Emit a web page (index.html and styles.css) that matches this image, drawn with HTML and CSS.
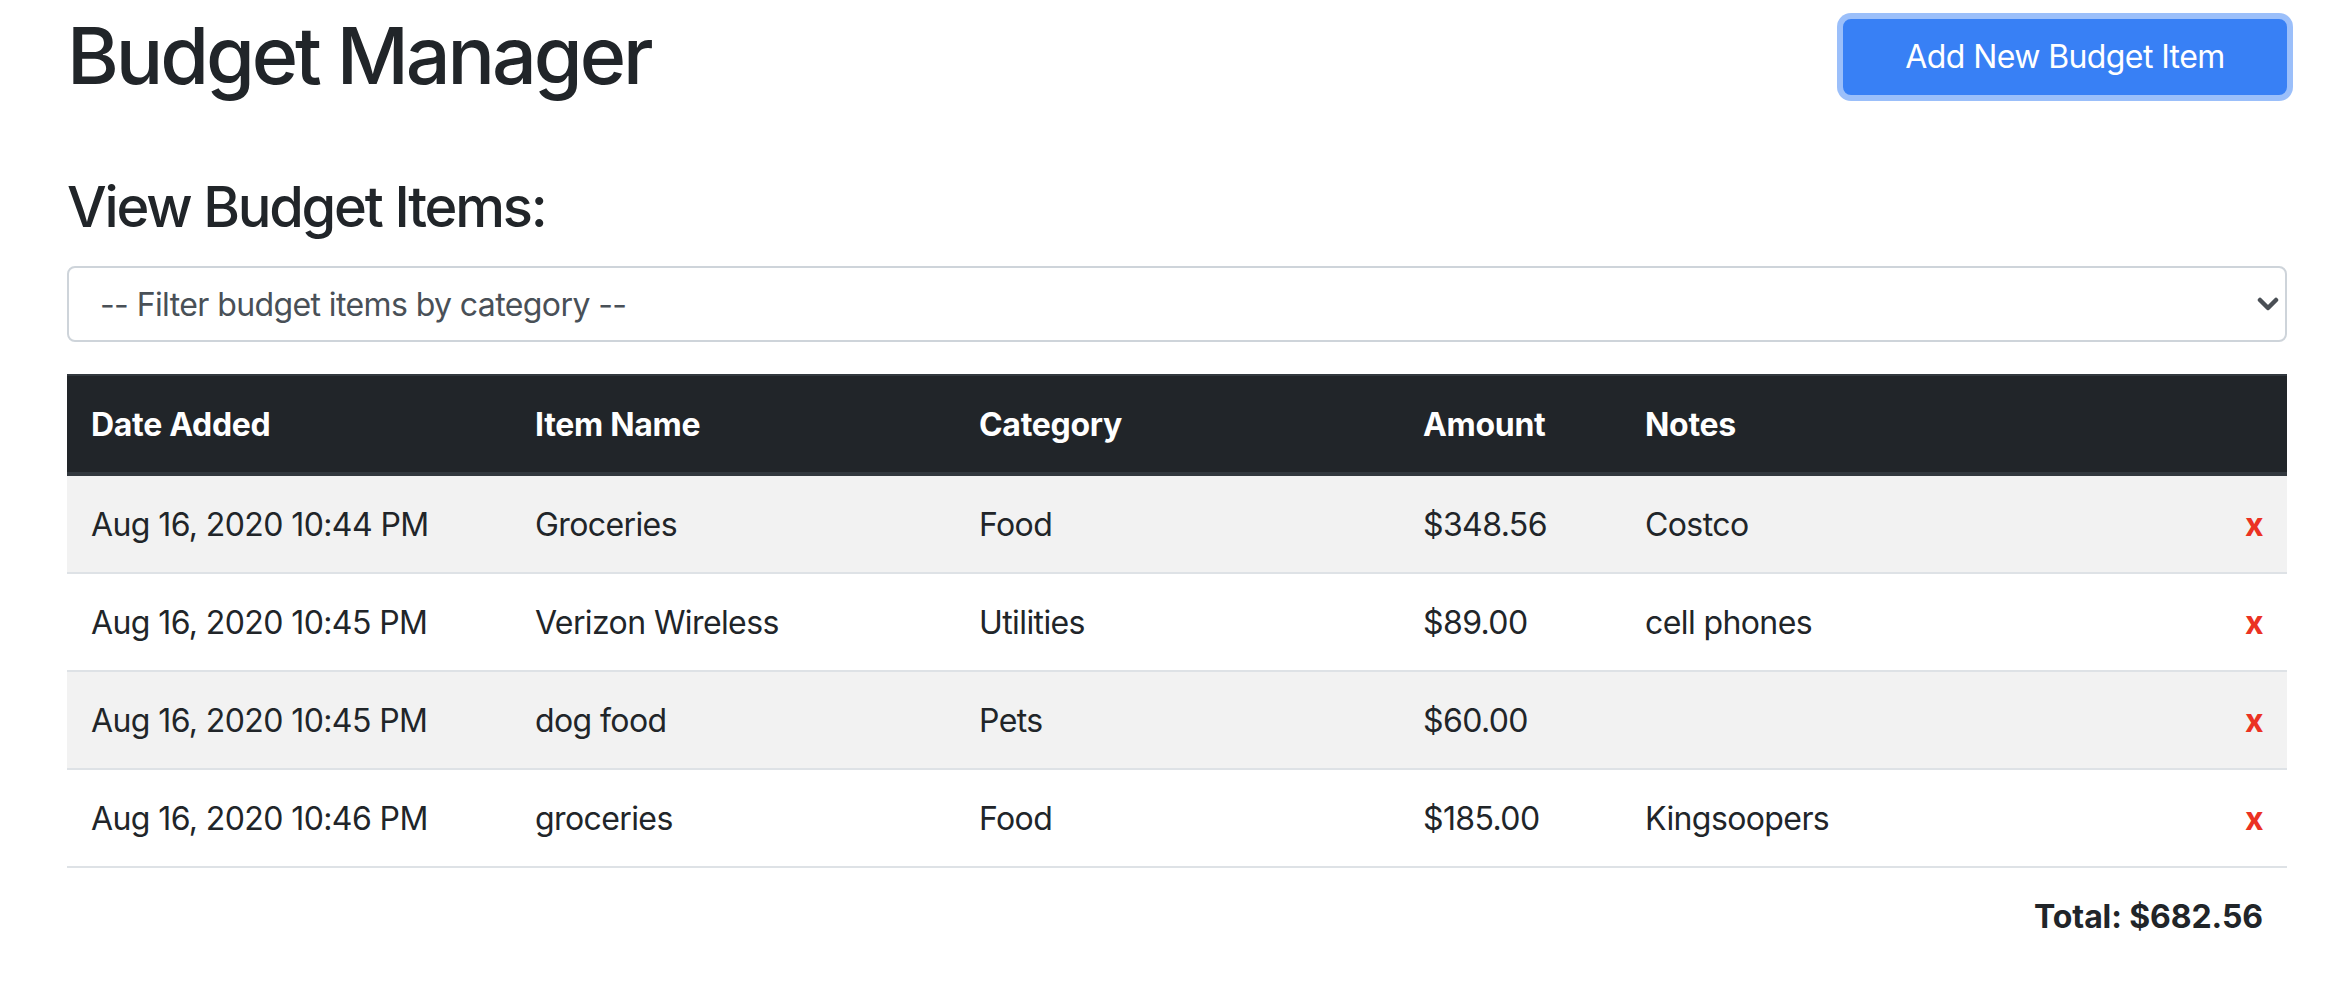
FILE: index.html
```html
<!DOCTYPE html>
<html lang="en">
<head>
<meta charset="utf-8">
<title>Budget Manager</title>
<link rel="stylesheet" href="styles.css">
</head>
<body>
<div class="container">
  <header class="top">
    <h1 class="title">Budget Manager</h1>
    <button class="btn-add" type="button">Add New Budget Item</button>
  </header>
  <h3 class="subtitle">View Budget Items:</h3>
  <div class="select-wrap">
    <select class="filter">
      <option>-- Filter budget items by category --</option>
      <option>Food</option>
      <option>Utilities</option>
      <option>Pets</option>
    </select>
    <svg class="chev" width="22" height="16" viewBox="0 0 22 16"><polyline points="3,4 11,12 19,4" fill="none" stroke="#4a4f55" stroke-width="4.5" stroke-linecap="round" stroke-linejoin="round"/></svg>
  </div>
  <table class="items">
    <colgroup>
      <col class="c-date"><col class="c-name"><col class="c-cat"><col class="c-amt"><col class="c-notes"><col class="c-del">
    </colgroup>
    <thead>
      <tr><th>Date Added</th><th>Item Name</th><th>Category</th><th>Amount</th><th>Notes</th><th></th></tr>
    </thead>
    <tbody>
      <tr><td>Aug 16, 2020 10:44 PM</td><td>Groceries</td><td>Food</td><td>$348.56</td><td>Costco</td><td class="del">x</td></tr>
      <tr><td>Aug 16, 2020 10:45 PM</td><td>Verizon Wireless</td><td>Utilities</td><td>$89.00</td><td>cell phones</td><td class="del">x</td></tr>
      <tr><td>Aug 16, 2020 10:45 PM</td><td>dog food</td><td>Pets</td><td>$60.00</td><td></td><td class="del">x</td></tr>
      <tr><td>Aug 16, 2020 10:46 PM</td><td>groceries</td><td>Food</td><td>$185.00</td><td>Kingsoopers</td><td class="del">x</td></tr>
    </tbody>
    <tfoot>
      <tr><td colspan="6" class="total">Total: $682.56</td></tr>
    </tfoot>
  </table>
</div>
</body>
</html>
```
FILE: styles.css
```css
* { box-sizing: border-box; }
html, body { margin: 0; padding: 0; background: #fff; }
body {
  font-family: "Inter", "Roboto", "Liberation Sans", sans-serif;
  font-size: 32px;
  line-height: 1.5;
  color: #212529;
}
.container {
  width: 2220px;
  margin-left: 67px;
}
.top {
  display: flex;
  justify-content: space-between;
  align-items: flex-start;
  padding-top: 7px;
}
.title {
  margin: 0;
  font-size: 79px;
  font-weight: 500;
  line-height: 96px;
  letter-spacing: -3.1px;
}
.btn-add {
  margin-top: 12px;
  width: 444px;
  height: 76px;
  border: 2px solid #3880f5;
  border-radius: 8px;
  background: #3880f5;
  color: #fff;
  font-family: inherit;
  font-size: 32px;
  line-height: 48px;
  letter-spacing: -0.6px;
  box-shadow: 0 0 0 6px rgba(56, 128, 245, 0.5);
  padding: 0;
}
.subtitle {
  margin: 71px 0 0;
  font-size: 56px;
  font-weight: 500;
  line-height: 67px;
  letter-spacing: -2.2px;
}
.select-wrap {
  position: relative;
  margin-top: 25px;
}
.filter {
  display: block;
  width: 100%;
  height: 76px;
  padding: 0 60px 0 31px;
  border: 2px solid #ced4da;
  border-radius: 8px;
  background: #fff;
  color: #495057;
  font-family: inherit;
  font-size: 32px;
  letter-spacing: -0.6px;
  -webkit-appearance: none;
  appearance: none;
}
.chev {
  position: absolute;
  right: 8px;
  top: 30px;
}
.items {
  margin-top: 32px;
  width: 100%;
  table-layout: fixed;
  border-collapse: collapse;
  letter-spacing: -0.6px;
}
.c-date, .c-name, .c-cat { width: 444px; }
.c-amt { width: 222px; }
.c-notes { width: 598px; }
.c-del { width: 68px; }
.items th, .items td {
  padding: 25px 24px 23px;
  line-height: 48px;
  text-align: left;
  vertical-align: top;
  white-space: nowrap;
}
.items thead th {
  background: #212529;
  color: #fff;
  font-weight: 700;
  letter-spacing: -0.3px;
  border-top: 2px solid #32383e;
  border-bottom: 4px solid #32383e;
}
.items tbody td {
  border-top: 2px solid #dee2e6;
}
.items tbody tr:nth-child(odd) td {
  background: #f2f2f2;
}
.items td.del {
  text-align: right;
  color: #eb3223;
  font-weight: 700;
}
.items td.total {
  border-top: 2px solid #dee2e6;
  text-align: right;
  font-weight: 700;
  letter-spacing: -0.1px;
}
```
